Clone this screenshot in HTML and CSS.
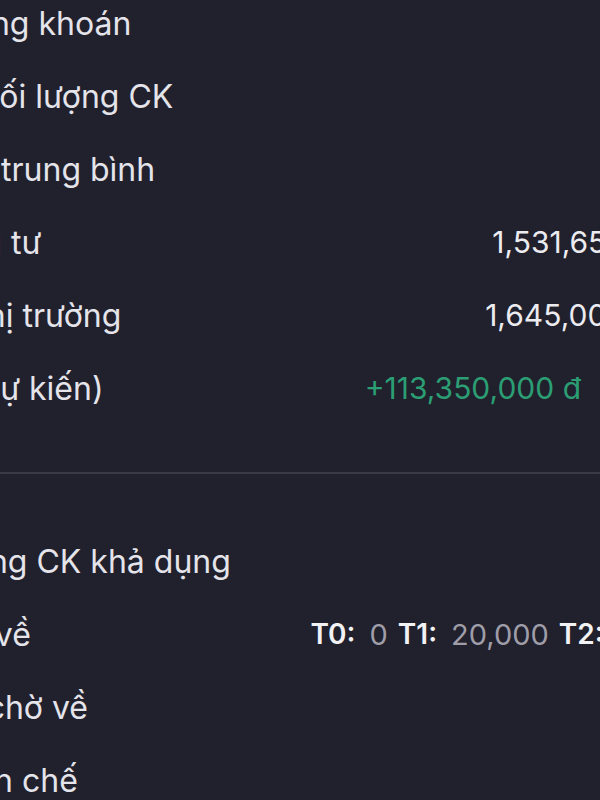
FILE: index.html
```html
<!DOCTYPE html>
<html lang="vi">
<head>
    <meta charset="UTF-8">
    <meta name="viewport" content="width=device-width, initial-scale=1.0">
    <title>Chi tiết chứng khoán</title>
    <link rel="stylesheet" href="styles.css">
</head>
<body>

    <div class="screen">
        <!-- Thông tin vị thế -->
        <div class="section section-top">
            <div class="row">
                <span class="label">Mã chứng khoán</span>
                <span class="value"></span>
            </div>
            <div class="row">
                <span class="label">Tổng khối lượng CK</span>
                <span class="value"></span>
            </div>
            <div class="row">
                <span class="label">Giá vốn trung bình</span>
                <span class="value"></span>
            </div>
            <div class="row">
                <span class="label">Vốn đầu tư</span>
                <span class="value">1,531,650,000 đ</span>
            </div>
            <div class="row">
                <span class="label">Giá trị thị trường</span>
                <span class="value">1,645,000,000 đ</span>
            </div>
            <div class="row">
                <span class="label">Lãi/lỗ (dự kiến)</span>
                <span class="value value-up">+113,350,000 đ</span>
            </div>
        </div>

        <div class="divider"></div>

        <!-- Khối lượng -->
        <div class="section section-bottom">
            <div class="row">
                <span class="label">Khối lượng CK khả dụng</span>
                <span class="value"></span>
            </div>
            <div class="row">
                <span class="label">CK mua về</span>
                <span class="value value-t">
                    <span class="t-item"><b>T0:</b><span class="muted">0</span></span>
                    <span class="t-item"><b>T1:</b><span class="muted">20,000</span></span>
                    <span class="t-item"><b>T2:</b><span class="muted">0</span></span>
                </span>
            </div>
            <div class="row">
                <span class="label">CK bán chờ về</span>
                <span class="value"></span>
            </div>
            <div class="row">
                <span class="label">CK bị hạn chế</span>
                <span class="value"></span>
            </div>
        </div>
    </div>

</body>
</html>
```

FILE: styles.css
```css
* {
    box-sizing: border-box;
}

body {
    margin: 0;
    padding: 0;
    height: 800px;
    overflow: hidden;
    background-color: #21202d;
    font-family: Inter, "Noto Sans", sans-serif;
    color: #e4e4ea;
}

/* la captura está recortada: el contenido sobresale por los lados */
.screen {
    width: 838px;
    margin-left: -122px;
    margin-top: -13px;
}

.row {
    display: flex;
    justify-content: space-between;
    align-items: center;
    height: 73px;
    line-height: 73px;
    white-space: nowrap;
}

.label {
    font-size: 32px;
    color: #e4e4ea;
}

.section-bottom .label {
    margin-left: -11px;
}

.value {
    font-size: 30px;
    color: #ececf0;
    text-align: right;
}

.value-up {
    color: #2b9e74;
    margin-right: 135px;
}

.value-t {
    display: flex;
    gap: 10px;
    margin-right: 80px;
}

.t-item {
    display: flex;
    gap: 14px;
}

.t-item b {
    font-size: 28px;
    font-weight: 600;
    color: #f2f2f5;
}

.muted {
    font-size: 29px;
    color: #9e9da8;
}

.divider {
    height: 2px;
    margin: 47px 0 0 122px;
    width: 600px;
    background-color: #3a3946;
}

.section-bottom {
    margin-top: 51px;
}
```
